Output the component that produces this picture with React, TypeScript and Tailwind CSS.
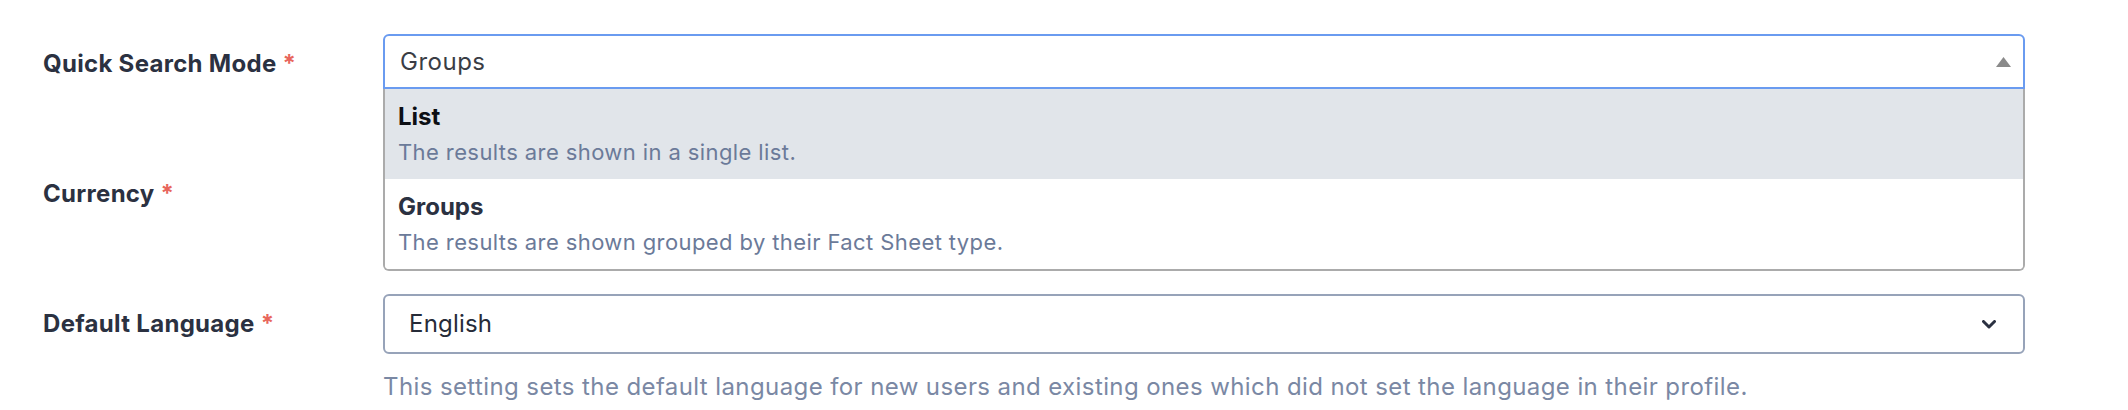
import React from "react";

const font = { fontFamily: "Inter, 'Liberation Sans', sans-serif" };

const Label = ({ text }: { text: string }) => (
  <div className="w-[340px] shrink-0 text-[24px] font-bold tracking-[0.3px] text-[#2b3141]">
    {text} <span className="text-[#e8665c]">*</span>
  </div>
);

const Option = ({ title, desc, active }: { title: string; desc: string; active?: boolean }) => (
  <div className={`pl-[13px] pt-[12px] pb-[11px] ${active ? "bg-[#e1e5ea]" : "bg-white"}`}>
    <div className={`text-[24px] font-bold leading-[32px] ${active ? "text-[#0d0f14]" : "text-[#2b3141]"}`}>{title}</div>
    <div className="mt-[3px] text-[22px] leading-[32px] tracking-[0.4px] text-[#6b7a99]">{desc}</div>
  </div>
);

const App = () => {
  return (
    <div className="w-[2128px] h-[410px] bg-white pt-[34px] pl-[43px]" style={font}>
      {/* Quick Search Mode – open */}
      <div className="flex items-center h-[60px]">
        <Label text="Quick Search Mode" />
        <div className="relative w-[1642px] h-[60px]">
          <div className="absolute top-0 left-0 right-0 z-10">
            <div className="flex items-center justify-between h-[55px] border-2 border-[#6a9bf0] rounded-t-[6px] bg-white pl-[15px] pr-[12px]">
              <span className="text-[24px] tracking-[0.5px] text-[#3a3d45]">Groups</span>
              <svg width="15" height="10" viewBox="0 0 15 10">
                <polygon points="7.5,0 15,10 0,10" fill="#8a8a8a" />
              </svg>
            </div>
            <div className="border-x-2 border-b-2 border-[#ababab] rounded-b-[6px] overflow-hidden bg-white">
              <Option title="List" desc="The results are shown in a single list." active />
              <Option title="Groups" desc="The results are shown grouped by their Fact Sheet type." />
            </div>
          </div>
        </div>
      </div>

      {/* Currency – hidden under menu */}
      <div className="flex items-center h-[60px] mt-[70px]">
        <Label text="Currency" />
        <div className="w-[1642px] h-[60px] border-2 border-[#97a3b9] rounded-[6px]" />
      </div>

      {/* Default Language */}
      <div className="flex items-start mt-[70px]">
        <div className="flex items-center h-[60px]">
          <Label text="Default Language" />
        </div>
        <div className="w-[1642px]">
          <div className="flex items-center justify-between h-[60px] border-2 border-[#97a3b9] rounded-[6px] bg-white pl-[24px] pr-[27px]">
            <span className="text-[24px] tracking-[0.2px] text-[#262b38]">English</span>
            <svg width="14" height="9" viewBox="0 0 14 9">
              <polyline points="1.5,1.5 7,7 12.5,1.5" fill="none" stroke="#2b3141" strokeWidth="3" strokeLinecap="round" strokeLinejoin="round" />
            </svg>
          </div>
          <div className="mt-[19px] text-[24px] leading-[28px] tracking-[0.4px] text-[#7a88a4]">
            This setting sets the default language for new users and existing ones which did not set the language in their profile.
          </div>
        </div>
      </div>
    </div>
  );
};

export default App;
